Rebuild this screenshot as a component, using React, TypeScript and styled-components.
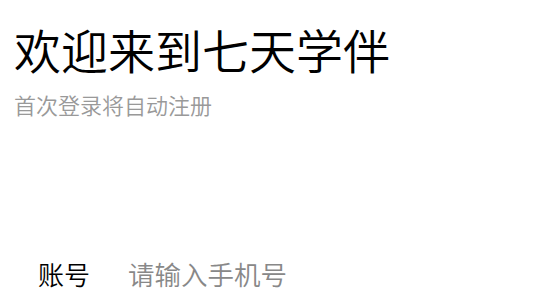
import styled, { createGlobalStyle } from 'styled-components';

const GlobalStyle = createGlobalStyle`
  html, body {
    margin: 0;
    padding: 0;
    background: #fff;
  }
  body {
    font-family: "Noto Sans CJK SC", "Noto Sans", sans-serif;
  }
`;

const Page = styled.div`
  display: flex;
  flex-direction: column;
  padding: 21px 14px 0 14px;
`;

const Title = styled.h1`
  margin: 0;
  font-size: 47px;
  font-weight: 350;
  line-height: 56px;
  color: #000;
`;

const Subtitle = styled.p`
  margin: 13px 0 0 0;
  font-size: 22px;
  font-weight: 350;
  line-height: 28px;
  color: #999;
`;

const Field = styled.label`
  display: flex;
  align-items: center;
  gap: 38px;
  margin-top: 138px;
  padding-left: 24px;
`;

const FieldLabel = styled.span`
  font-size: 26px;
  font-weight: 350;
  line-height: 36px;
  color: #000;
`;

const FieldInput = styled.input`
  flex: 1;
  border: none;
  outline: none;
  padding: 0;
  background: transparent;
  font-family: inherit;
  font-size: 26.5px;
  font-weight: 350;
  line-height: 36px;
  color: #000;

  &::placeholder {
    color: #888;
  }
`;

export default function App() {
  return (
    <>
      <GlobalStyle />
      <Page>
        <Title>欢迎来到七天学伴</Title>
        <Subtitle>首次登录将自动注册</Subtitle>
        <Field>
          <FieldLabel>账号</FieldLabel>
          <FieldInput type="tel" placeholder="请输入手机号" />
        </Field>
      </Page>
    </>
  );
}
